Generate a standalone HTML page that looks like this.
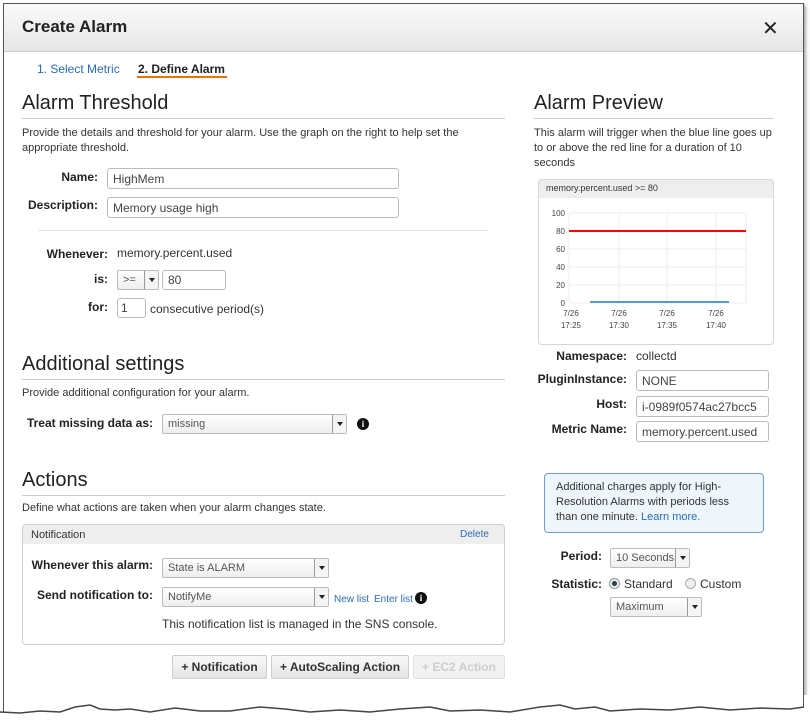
<!DOCTYPE html>
<html><head><meta charset="utf-8"><style>
*{box-sizing:border-box;margin:0;padding:0}
body{width:810px;height:727px;background:#fff;font-family:"Liberation Sans",Arial,sans-serif;color:#333;position:relative;overflow:hidden;font-size:12px}
.a{position:absolute;white-space:nowrap}
.dlg{position:absolute;left:3px;top:3px;width:801px;height:712px;border:1px solid #555;border-bottom:none;box-shadow:2px 2px 3px rgba(0,0,0,.35)}
.hdr{position:absolute;left:4px;top:4px;width:799px;height:48px;background:linear-gradient(#fafafa,#e6e6e6);border-bottom:1px solid #ccc}
.h1{font-size:20px;color:#222}
.hr{position:absolute;height:1px;background:#ccc}
.lbl{font-weight:bold;font-size:12px;text-align:right;color:#222}
.in{position:absolute;height:21px;border:1px solid #bbb;border-radius:3px;font-size:12px;padding:3px 5px;color:#444;background:#fff}
.sel{position:absolute;height:20px;border:1px solid #bbb;border-radius:2px;font-size:11px;padding:3px 5px;color:#555;background:linear-gradient(#fff,#eee)}
.sel b{position:absolute;right:0;top:0;width:14px;height:18px;border-left:1px solid #999;background:#f4f4f4}
.sel b:after{content:"";position:absolute;left:4px;top:7px;border:3px solid transparent;border-top:4px solid #222}
.info{position:absolute;width:12px;height:12px;border-radius:50%;background:#111;color:#fff;font:bold 9px "Liberation Serif",serif;text-align:center;line-height:12px}
.btn{position:absolute;height:24px;border:1px solid #ccc;border-radius:2px;background:linear-gradient(#f9f9f9,#e4e4e4);font-weight:bold;font-size:12px;text-align:center;line-height:22px;color:#333}
.link{color:#2a6db5}
</style></head><body>
<div class="dlg"></div>
<svg class="a" style="left:0;top:695px" width="810" height="32"><path d="M0,32 L0,17 L20,18 L40,16 L60,17 L75,12 L90,10 L100,14 L115,15 L130,14 L150,17 L175,13 L200,16 L230,16 L260,12 L285,14 L310,17 L340,15 L370,17 L400,14 L430,12 L450,16 L480,15 L510,17 L540,12 L560,10 L575,14 L595,12 L610,16 L640,14 L670,15 L700,12 L730,15 L760,13 L790,14 L804,12 L804,0 L810,0 L810,32Z" fill="#fff" stroke="none"/><path d="M0,17 L20,18 L40,16 L60,17 L75,12 L90,10 L100,14 L115,15 L130,14 L150,17 L175,13 L200,16 L230,16 L260,12 L285,14 L310,17 L340,15 L370,17 L400,14 L430,12 L450,16 L480,15 L510,17 L540,12 L560,10 L575,14 L595,12 L610,16 L640,14 L670,15 L700,12 L730,15 L760,13 L790,14 L804,12" fill="none" stroke="#444" stroke-width="1.5"/></svg>
<div class="hdr"></div>
<div class="a h1" style="left:22px;top:17px;font-weight:bold;font-size:17px">Create Alarm</div>
<div class="a" style="left:762px;top:16px;font-size:20px;color:#222">✕</div>
<div class="a link" style="left:37px;top:62px">1. Select Metric</div>
<div class="a" style="left:138px;top:62px;font-weight:bold;color:#222">2. Define Alarm</div>
<div class="a" style="left:137px;top:76px;width:90px;height:2px;background:#e8720c"></div>

<div class="a h1" style="left:22px;top:92px">Alarm Threshold</div>
<div class="hr" style="left:22px;top:118px;width:483px"></div>
<div class="a" style="left:22px;top:126px;font-size:11px;line-height:15px;white-space:normal;width:470px">Provide the details and threshold for your alarm. Use the graph on the right to help set the appropriate threshold.</div>
<div class="a lbl" style="left:30px;top:170px;width:68px">Name:</div>
<div class="in" style="left:107px;top:168px;width:292px">HighMem</div>
<div class="a lbl" style="left:20px;top:198px;width:78px">Description:</div>
<div class="in" style="left:107px;top:197px;width:292px">Memory usage high</div>
<div class="hr" style="left:38px;top:230px;width:450px;background:#e2e2e2"></div>
<div class="a lbl" style="left:30px;top:247px;width:78px">Whenever:</div>
<div class="a" style="left:117px;top:246px">memory.percent.used</div>
<div class="a lbl" style="left:30px;top:272px;width:78px">is:</div>
<div class="sel" style="left:117px;top:270px;width:42px">&gt;=<b></b></div>
<div class="in" style="left:162px;top:270px;width:64px;height:20px;padding:2px 5px">80</div>
<div class="a lbl" style="left:30px;top:300px;width:78px">for:</div>
<div class="in" style="left:117px;top:298px;width:29px;height:20px;padding:2px 3px">1</div>
<div class="a" style="left:150px;top:302px">consecutive period(s)</div>

<div class="a h1" style="left:22px;top:353px">Additional settings</div>
<div class="hr" style="left:22px;top:379px;width:483px"></div>
<div class="a" style="left:22px;top:387px;font-size:11px">Provide additional configuration for your alarm.</div>
<div class="a lbl" style="left:20px;top:416px;width:133px">Treat missing data as:</div>
<div class="sel" style="left:162px;top:414px;width:185px">missing<b></b></div>
<div class="info" style="left:357px;top:418px">i</div>

<div class="a h1" style="left:22px;top:469px">Actions</div>
<div class="hr" style="left:22px;top:495px;width:483px"></div>
<div class="a" style="left:22px;top:502px;font-size:11px">Define what actions are taken when your alarm changes state.</div>
<div class="a" style="left:22px;top:524px;width:483px;height:121px;border:1px solid #d0d0d0;border-radius:4px"></div>
<div class="a" style="left:23px;top:525px;width:481px;height:19px;background:#eee;border-radius:3px 3px 0 0"></div>
<div class="a" style="left:31px;top:529px;font-size:11px">Notification</div>
<div class="a link" style="left:460px;top:529px;font-size:10px">Delete</div>
<div class="a lbl" style="left:20px;top:558px;width:133px">Whenever this alarm:</div>
<div class="sel" style="left:162px;top:558px;width:167px">State is ALARM<b></b></div>
<div class="a lbl" style="left:20px;top:588px;width:133px">Send notification to:</div>
<div class="sel" style="left:162px;top:587px;width:167px">NotifyMe<b></b></div>
<div class="a link" style="left:334px;top:594px;font-size:10px">New list</div>
<div class="a link" style="left:374px;top:594px;font-size:10px">Enter list</div>
<div class="info" style="left:415px;top:592px">i</div>
<div class="a" style="left:162px;top:617px">This notification list is managed in the SNS console.</div>
<div class="btn" style="left:172px;top:655px;width:95px">+ Notification</div>
<div class="btn" style="left:271px;top:655px;width:138px">+ AutoScaling Action</div>
<div class="btn" style="left:413px;top:655px;width:92px;color:#ccc;background:#f2f2f2;border-color:#e0e0e0">+ EC2 Action</div>

<div class="a h1" style="left:534px;top:92px">Alarm Preview</div>
<div class="hr" style="left:534px;top:118px;width:240px"></div>
<div class="a" style="left:534px;top:126px;font-size:11px;line-height:15px;white-space:normal;width:240px">This alarm will trigger when the blue line goes up to or above the red line for a duration of 10 seconds</div>
<div class="a" style="left:538px;top:179px;width:236px;height:166px;border:1px solid #d5d5d5;border-radius:4px;overflow:hidden">
<div style="height:18px;background:#eee;font-size:9px;padding:3px 7px">memory.percent.used &gt;= 80</div>
<svg width="236" height="148" style="position:absolute;left:0;top:18px" font-family="Liberation Sans" font-size="8" fill="#444">
<g stroke="#eee"><line x1="30" y1="15" x2="207" y2="15"/><line x1="30" y1="33" x2="207" y2="33"/><line x1="30" y1="51" x2="207" y2="51"/><line x1="30" y1="69" x2="207" y2="69"/><line x1="30" y1="87" x2="207" y2="87"/><line x1="30" y1="105" x2="207" y2="105"/><line x1="30" y1="15" x2="30" y2="105"/><line x1="80" y1="15" x2="80" y2="105"/><line x1="128" y1="15" x2="128" y2="105"/><line x1="177" y1="15" x2="177" y2="105"/><line x1="207" y1="15" x2="207" y2="105"/></g>
<line x1="30" y1="33" x2="207" y2="33" stroke="#f00" stroke-width="2"/>
<line x1="51" y1="104" x2="190" y2="104" stroke="#5b9bd5" stroke-width="2"/>
<g text-anchor="end"><text x="26" y="18">100</text><text x="26" y="36">80</text><text x="26" y="54">60</text><text x="26" y="72">40</text><text x="26" y="90">20</text><text x="26" y="108">0</text></g>
<g text-anchor="middle"><text x="32" y="118">7/26</text><text x="32" y="130">17:25</text><text x="80" y="118">7/26</text><text x="80" y="130">17:30</text><text x="128" y="118">7/26</text><text x="128" y="130">17:35</text><text x="177" y="118">7/26</text><text x="177" y="130">17:40</text></g>
</svg></div>
<div class="a lbl" style="left:540px;top:349px;width:87px">Namespace:</div>
<div class="a" style="left:636px;top:349px">collectd</div>
<div class="a lbl" style="left:530px;top:372px;width:97px">PluginInstance:</div>
<div class="in" style="left:636px;top:370px;width:133px">NONE</div>
<div class="a lbl" style="left:530px;top:397px;width:97px">Host:</div>
<div class="in" style="left:636px;top:396px;width:133px">i-0989f0574ac27bcc5</div>
<div class="a lbl" style="left:530px;top:422px;width:97px">Metric Name:</div>
<div class="in" style="left:636px;top:421px;width:133px">memory.percent.used</div>
<div class="a" style="left:544px;top:473px;width:220px;height:60px;border:1px solid #6a9fd0;border-radius:4px;background:#eef5fb;font-size:11px;line-height:15px;padding:6px 11px;white-space:normal">Additional charges apply for High-Resolution Alarms with periods less than one minute. <span class="link">Learn more.</span></div>
<div class="a lbl" style="left:540px;top:549px;width:62px">Period:</div>
<div class="sel" style="left:610px;top:548px;width:80px">10 Seconds<b></b></div>
<div class="a lbl" style="left:540px;top:577px;width:62px">Statistic:</div>
<div class="a" style="left:609px;top:578px;width:11px;height:11px;border:1px solid #999;border-radius:50%;background:radial-gradient(#245 35%,#eee 45%)"></div>
<div class="a" style="left:624px;top:577px">Standard</div>
<div class="a" style="left:685px;top:578px;width:11px;height:11px;border:1px solid #aaa;border-radius:50%;background:#eee"></div>
<div class="a" style="left:700px;top:577px">Custom</div>
<div class="sel" style="left:610px;top:597px;width:92px">Maximum<b></b></div>
</body></html>
